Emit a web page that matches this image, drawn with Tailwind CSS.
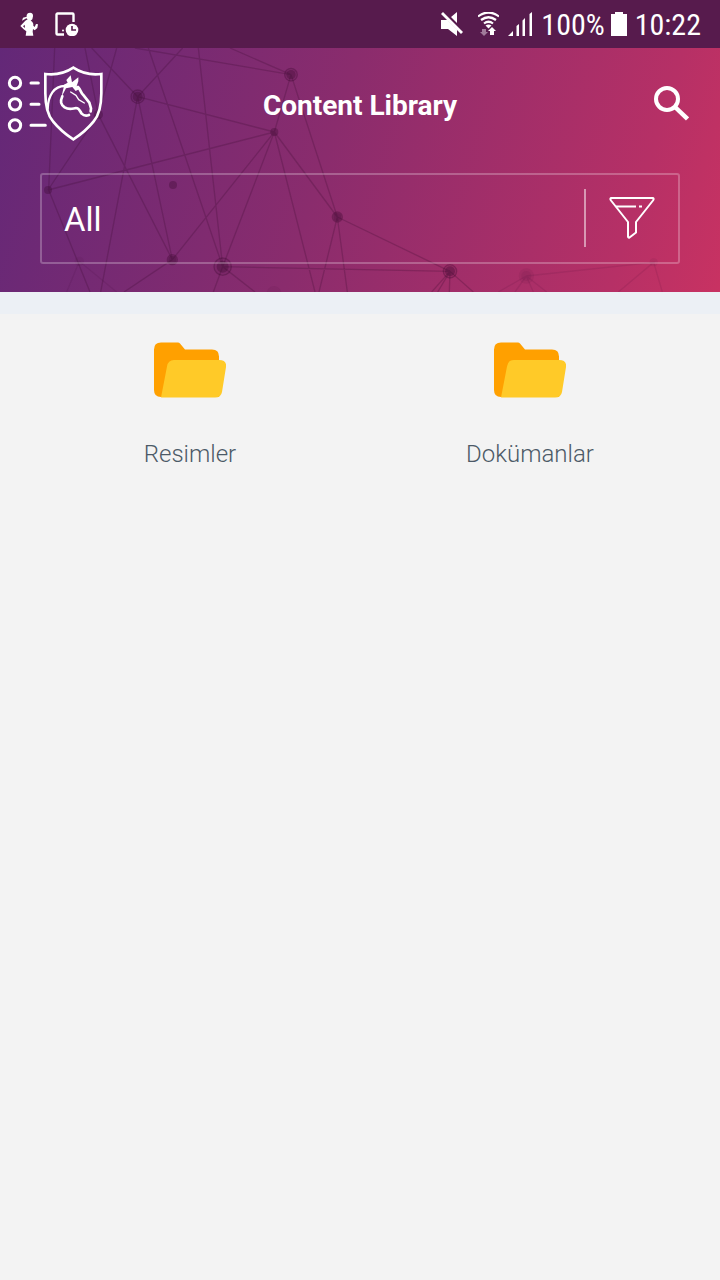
<!DOCTYPE html>
<html lang="en">
<head>
<meta charset="utf-8">
<meta name="viewport" content="width=device-width, initial-scale=1">
<title>Content Library</title>
<script src="https://cdn.jsdelivr.net/npm/@tailwindcss/browser@4"></script>
</head>
<body class="min-h-screen bg-[#f3f3f3] font-['Roboto',sans-serif]">
<!-- Status bar -->
<div class="flex h-12 items-center justify-between bg-[#571b4d] pl-5 pr-[19px] text-white">
  <div class="flex items-center gap-[17px]">
    <svg class="h-6 w-[18px]" viewBox="0 0 54 72" fill="currentColor" aria-hidden="true"><path d="M20 9q2-7 10-7 10 0 9 11l-2 9-5 4q9 4 8 15l4 4 4-9 6 1-2 11-8 7-5-4-1 8 2 12H17l2-13-8-6L1 42l15-16 7-4-4-3-13 7 3-9 11-3zM14 38l-5 5 6 5z" fill-rule="evenodd"/></svg>
    <svg class="h-6 w-6" viewBox="0 0 24 24" fill="none" aria-hidden="true"><path d="M9 22.500H2.500a1 1 0 0 1-1-1V2.500a1 1 0 0 1 1-1h15a1 1 0 0 1 1 1V10" stroke="currentColor" stroke-width="2.400"/><circle cx="8" cy="18.500" r="1" fill="currentColor"/><circle cx="17" cy="18" r="6.300" fill="currentColor"/><path d="M17 14v4h4" stroke="#571b4d" stroke-width="1.600"/></svg>
  </div>
  <div class="flex items-center">
    <svg class="mr-[15px] h-6 w-[22px]" viewBox="0 0 22 24" fill="currentColor" aria-hidden="true"><path d="M0 8h6l10 10v6L7 17H0zM16 0v11l-6-6zM2 0l20 20-2 2L0 2z"/></svg>
    <svg class="mr-[9px] h-6 w-[21px]" viewBox="0 0 21 24" fill="none" stroke="currentColor" stroke-width="2.200" aria-hidden="true"><path d="M0 4.500q10.500-8 21 0M3 8q7.500-5.500 15 0M6 11.500q4.500-3.500 9 0"/><path d="M7.500 13.500q3-2 6 0l-3 3z" fill="currentColor" stroke="none"/><path d="M8 17v3h2l-4 4-4-4h2v-3z" fill="#a07b9a" stroke="none"/><path d="M14 15l4 4h-2v4h-4v-4h-2z" fill="currentColor" stroke="none"/></svg>
    <svg class="mr-[9px] h-6 w-6" viewBox="0 0 24 24" fill="currentColor" aria-hidden="true"><path d="M0 24l5-5v5zM8.500 14l2.500-2V24H8.500zM14.500 8.500L17 6v18h-2.500zM21.500 2L24 0v24h-2.500z"/></svg>
    <span class="pt-px font-['Roboto_Condensed','Roboto',sans-serif] text-[30px] leading-9">100%</span>
    <svg class="mr-2 ml-[6px] h-6 w-4" viewBox="0 0 16 24" fill="currentColor" aria-hidden="true"><path d="M4 0h8v2h4v22H0V2h4z"/></svg>
    <span class="pt-px font-['Roboto_Condensed','Roboto',sans-serif] text-[30px] leading-9">10:22</span>
  </div>
</div>

<!-- Header with network backdrop -->
<header class="relative overflow-hidden bg-[linear-gradient(107deg,#632878_0%,#8a2c6d_45%,#b63066_86%,#c83262_100%)] pb-7 text-white">
  <svg class="pointer-events-none absolute inset-0 h-full w-full" viewBox="0 0 2160 732" preserveAspectRatio="xMidYMid slice" aria-hidden="true">
    <g fill="none" stroke="#3a0a30" stroke-opacity=".25" stroke-width="4">
      <path d="M164 0L146 426L270 732M144 426L823 252M144 426L295 200L255 0M295 200L517 635M275 0L413 146L548 0M413 146L823 252M413 146L517 635M413 146L302 732M350 0L295 200M445 0L668 656L595 0M405 0L873 80L690 0M873 80L823 252M873 80L1012 507M517 635L823 252L668 656M945 732L823 252L1012 507M957 732L1012 507L1042 732M1012 507L1350 670L668 656M640 732L668 656L765 732M517 635L372 732M1295 732L1350 670L1313 732M1348 732L1350 670L1420 732"/>
      <path stroke-opacity=".1" d="M200 732L238 640L350 732M1495 732L1579 684L1545 732M1600 732L1579 684L1640 732M1579 684L1961 643L1855 732M1961 643L1987 732"/>
    </g>
    <g fill="#3a0a30" fill-opacity=".34">
      <circle cx="413" cy="146" r="15"/><circle cx="873" cy="80" r="14"/><circle cx="823" cy="252" r="12"/><circle cx="144" cy="426" r="12"/><circle cx="519" cy="411" r="12"/><circle cx="517" cy="635" r="12"/><circle cx="668" cy="656" r="18"/><circle cx="1012" cy="507" r="12"/><circle cx="295" cy="200" r="14"/><circle cx="1350" cy="670" r="15"/>
    </g>
    <g fill="#3a0a30" fill-opacity=".1" stroke="#3a0a30" stroke-opacity=".3" stroke-width="4">
      <circle cx="413" cy="146" r="20"/><circle cx="873" cy="80" r="19"/><circle cx="517" cy="635" r="15"/><circle cx="668" cy="656" r="26"/><circle cx="1012" cy="507" r="15"/><circle cx="1350" cy="670" r="20"/>
    </g>
    <g fill="#3a0a30" fill-opacity=".08"><circle cx="238" cy="640" r="14"/><circle cx="822" cy="736" r="22"/><circle cx="1579" cy="684" r="23"/><circle cx="1579" cy="684" r="15"/><circle cx="1961" cy="643" r="12"/></g>
  </svg>

  <div class="relative grid grid-cols-[120px_1fr_120px] items-center">
    <button type="button" aria-label="Menu" class="h-[125px] pb-[13px] pl-[7px]">
      <svg class="h-20 w-[98px]" viewBox="21 27 294 240" fill="none" stroke="white" stroke-linecap="round" stroke-linejoin="round" aria-hidden="true">
        <g stroke-width="9"><circle cx="45" cy="84" r="17"/><circle cx="45" cy="148" r="17"/><circle cx="45" cy="211" r="17"/><path d="M93 84h22M93 148h24M93 211h43"/></g>
        <path stroke-width="8" stroke-linejoin="miter" d="M220 38q-38 25-84 19v58q0 58 23 84 25 31 61 54 36-23 61-54 23-26 23-84V57q-46 6-84-19z"/>
        <path stroke-width="7" d="M143 162C144 122 162 92 196 93"/>
        <path stroke-width="8" d="M187 124c-7 16-5 24 7 33 14 9 22 4 34 2 10 0 12 10 17 17 7 7 13 8 22 4"/>
        <path stroke-width="8" d="M234 96c9 9 8 17 15 23l19 24 5 17-1 9"/>
        <path fill="white" stroke="none" d="M192 89l11-6-4-8 13-14 4 21 19-15 0 12-5 14 7 10-10 5-10-12-19 4-14 27 8-34z"/>
        <path stroke-width="4" d="M212 111l16 10 8 13 17 10"/>
      </svg>
    </button>
    <h1 class="pb-[9px] text-center text-[28px] leading-8 font-bold">Content Library</h1>
    <button type="button" aria-label="Search" class="flex h-[125px] justify-end pt-9 pr-[31px]">
      <svg class="h-[38px] w-[38px]" viewBox="0 0 38 38" fill="none" stroke="white" stroke-width="4" aria-hidden="true"><circle cx="16" cy="15" r="11"/><path stroke-width="4.500" d="M24 23L36.500 35"/></svg>
    </button>
  </div>

  <div class="relative mx-10 flex h-[91px] items-center rounded-[3px] border-2 border-white/25">
    <select aria-label="Category" class="h-full min-w-0 flex-1 appearance-none bg-transparent pt-[2px] pl-[22px] text-[33px] leading-10 text-white outline-none"><option>All</option></select>
    <button type="button" aria-label="Filter" class="mb-[2px] flex h-[58px] w-[94px] items-center justify-center border-l-2 border-white/50">
      <svg class="h-[42px] w-[46px]" viewBox="0 0 46 42" fill="none" stroke="white" stroke-width="2" stroke-linejoin="round" aria-hidden="true"><path d="M2.500 1h41q2 0 .5 2.500L27 25v10.500l-6.500 5q-1.500 .5-1.500-1V25L2 3.500Q.5 1 2.500 1z"/><path d="M7 9.500h20M30 9.500h3"/></svg>
    </button>
  </div>
</header>
<div class="h-[22px] bg-[#ecf0f5]"></div>

<!-- Folders -->
<main class="grid grid-cols-2 px-5 pt-7">
  <a href="#resimler" class="flex flex-col items-center gap-10 text-[24px] leading-8 font-light text-[#4c5a67]">
    <svg class="h-14 w-[72px]" viewBox="0 0 72 56" aria-hidden="true"><path fill="#ffa000" d="M7 .5h17q1 0 2 1l5 6h27q7 0 7 7V55H7q-7 0-7-7V7.500q0-7 7-7z"/><path fill="#ffca28" d="M20 18h45q8 0 7 7l-4 25q-1 5.500-7 5.500H7l6-31q1-6.500 7-6.500z"/></svg>
    <span>Resimler</span>
  </a>
  <a href="#dokumanlar" class="flex flex-col items-center gap-10 text-[24px] leading-8 font-light text-[#4c5a67]">
    <svg class="h-14 w-[72px]" viewBox="0 0 72 56" aria-hidden="true"><path fill="#ffa000" d="M7 .5h17q1 0 2 1l5 6h27q7 0 7 7V55H7q-7 0-7-7V7.500q0-7 7-7z"/><path fill="#ffca28" d="M20 18h45q8 0 7 7l-4 25q-1 5.500-7 5.500H7l6-31q1-6.500 7-6.500z"/></svg>
    <span>Dokümanlar</span>
  </a>
</main>
</body>
</html>
